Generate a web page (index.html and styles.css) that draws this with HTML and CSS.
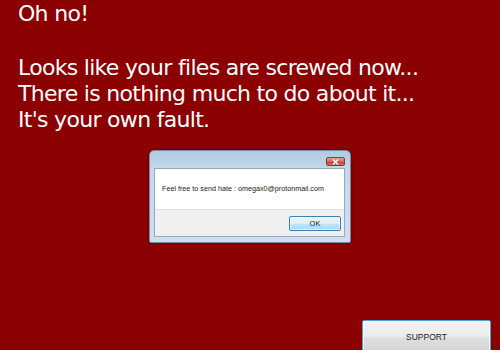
FILE: index.html
```html
<!DOCTYPE html>
<html>
<head>
<meta charset="utf-8">
<link rel="stylesheet" href="styles.css">
</head>
<body>
<div class="page">
  <div class="message">
    <p class="title">Oh no!</p>
    <p class="lines">Looks like your files are screwed now...<br>There is nothing much to do about it...<br>It's your own fault.</p>
  </div>
  <div class="dialog">
    <div class="titlebar">
      <div class="close">
        <svg width="7" height="6" viewBox="0 0 7 6"><path d="M1 0.5 L6 5.5 M6 0.5 L1 5.5" stroke="#fff" stroke-width="1.4"/></svg>
      </div>
    </div>
    <div class="client">
      <div class="body-text">Feel free to send hate : omegax0@protonmail.com</div>
      <div class="buttons"><div class="ok">OK</div></div>
    </div>
  </div>
  <div class="support-row"><div class="support">SUPPORT</div></div>
</div>
</body>
</html>
```
FILE: styles.css
```css
html, body {
  margin: 0;
  padding: 0;
}
body {
  background: #8b0000;
  width: 500px;
  height: 350px;
  overflow: hidden;
}
.page {
  display: flex;
  flex-direction: column;
  height: 350px;
}
.message {
  padding: 1px 0 0 18px;
  font-family: "DejaVu Sans", Verdana, sans-serif;
  font-size: 22px;
  letter-spacing: -0.7px;
  line-height: 26px;
  color: #fff;
}
.message p {
  margin: 0;
}
.message .title {
  margin-bottom: 28px;
}
.dialog {
  align-self: center;
  width: 191px;
  margin-top: 17px;
  border: 1px solid #7b8a9e;
  border-radius: 5px 5px 2px 2px;
  background: linear-gradient(#b3c9e2, #c4d7ec 20%, #cddff1);
  padding: 0 5px 5px 4px;
  box-shadow: 0 0 3px rgba(0,0,0,0.35);
}
.titlebar {
  height: 17px;
  display: flex;
  justify-content: flex-end;
  align-items: flex-start;
  padding-top: 6px;
  box-sizing: border-box;
}
.close {
  width: 19px;
  height: 9px;
  border: 1px solid #8a3a3a;
  border-radius: 2px;
  box-sizing: border-box;
  background: linear-gradient(#e0a096, #d0685a 50%, #c04434 51%, #d26e5c);
  display: flex;
  align-items: center;
  justify-content: center;
}
.close svg {
  display: block;
}
.client {
  border: 1px solid #98a9bc;
  background: #f0f0f0;
  font-family: "Liberation Sans", Arial, sans-serif;
  color: #222;
}
.body-text {
  background: #fff;
  height: 40px;
  padding: 0 0 0 7px;
  font-size: 7.2px;
  line-height: 40px;
  border-bottom: 1px solid #dfdfdf;
}
.buttons {
  height: 26px;
  display: flex;
  justify-content: flex-end;
  align-items: flex-start;
  padding: 6px 3px 0 0;
  box-sizing: border-box;
}
.ok {
  width: 52px;
  height: 15px;
  box-sizing: border-box;
  border: 1px solid #3c7fb1;
  border-radius: 2px;
  background: linear-gradient(#eaf6fd, #d9f0fc 50%, #bee6fd 51%, #a7d9f5);
  box-shadow: inset 0 0 0 1px rgba(255,255,255,0.6);
  font-size: 7.5px;
  line-height: 13px;
  text-align: center;
  color: #222;
}
.support-row {
  display: flex;
  justify-content: flex-end;
  padding-right: 9px;
  margin-top: 77px;
}
.support {
  width: 129px;
  height: 36px;
  box-sizing: border-box;
  border: 1px solid #46a6dc;
  border-radius: 2px;
  background: linear-gradient(#f3f3f3, #ebebeb 45%, #dedede 50%, #d2d2d2);
  box-shadow: inset 0 0 0 1px rgba(255,255,255,0.7);
  font-family: "Liberation Sans", Arial, sans-serif;
  font-size: 8.5px;
  color: #222;
  text-align: center;
  padding-top: 11px;
  line-height: 10px;
}
```
